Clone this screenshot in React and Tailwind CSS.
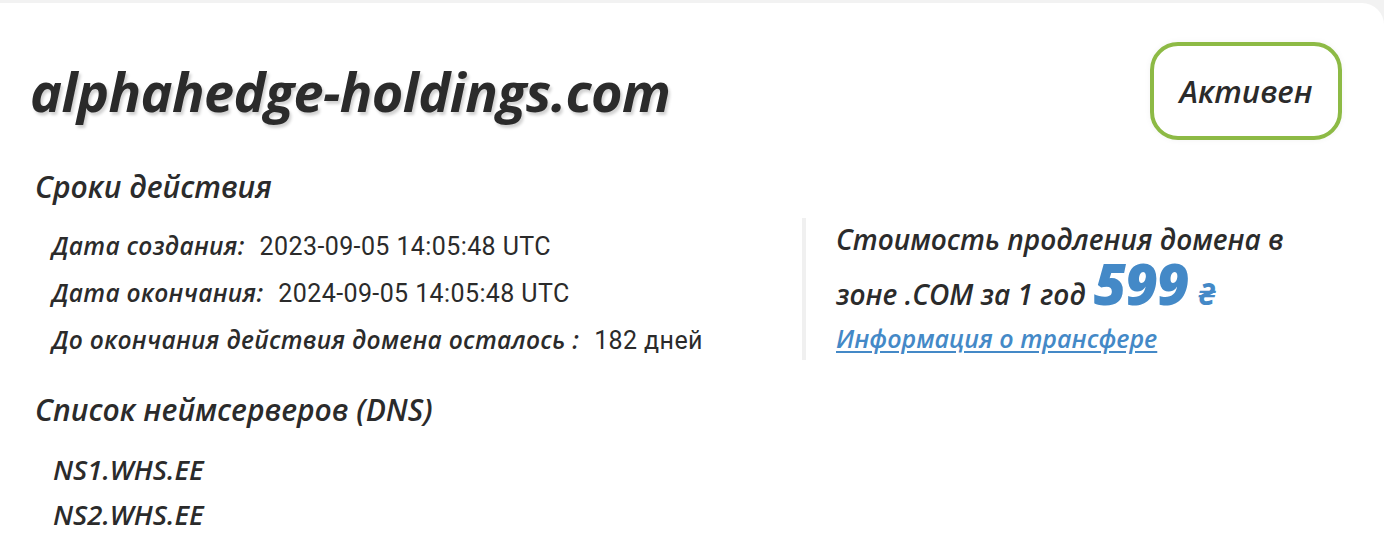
const font = { fontFamily: '"Open Sans", "Noto Sans", sans-serif' };

const DateRow = ({ label, value }) => (
  <div className="flex items-baseline h-[47px] leading-[47px]">
    <span className="italic font-semibold text-[24.5px] text-[#2b2b2b] tracking-[0.3px]">{label}</span>
    <span className="ml-[15px] text-[25px] text-[#2b2b2b] font-['Roboto',sans-serif] tracking-[0.4px]">{value}</span>
  </div>
);

export default function App() {
  return (
    <div className="bg-[#f2f2f2] pt-[3px] min-h-screen" style={font}>
      <div className="bg-white rounded-tr-[22px] min-h-[555px] pl-[30px] pr-[42px]">
        <div className="flex justify-between items-center pt-[39px] h-[137px]">
          <h1 className="italic font-bold text-[54px] leading-none text-[#2b2b2b] [text-shadow:2px_3px_3px_rgba(0,0,0,0.18)] tracking-[-0.6px]">
            alphahedge-holdings.com
          </h1>
          <div className="w-[192px] h-[98px] border-[4px] border-[#8dba45] rounded-[28px] flex items-center justify-center shadow-[0_0_6px_rgba(0,0,0,0.05)]">
            <span className="italic font-semibold text-[31px] text-[#2b2b2b]">Активен</span>
          </div>
        </div>

        <h2 className="mt-[27px] pl-[5px] italic font-semibold text-[30px] leading-[40px] text-[#2b2b2b]">
          Сроки действия
        </h2>

        <div className="flex h-[142px] mt-[11px]">
          <div className="w-[772px] pt-[4px] pl-[22px]">
            <DateRow label="Дата создания:" value="2023-09-05 14:05:48 UTC" />
            <DateRow label="Дата окончания:" value="2024-09-05 14:05:48 UTC" />
            <DateRow label="До окончания действия домена осталось :" value="182 дней" />
          </div>
          <div className="w-[4px] h-[142px] bg-[#f0f0f0]" />
          <div className="pl-[30px] text-[#2b2b2b]">
            <div className="italic font-semibold text-[28px] leading-[42px]">
              Стоимость продления домена в
            </div>
            <div className="flex items-baseline h-[46px] italic font-semibold">
              <span className="text-[28px] leading-[28px]">зоне .COM за 1 год</span>
              <span className="ml-[8px] font-extrabold text-[56px] leading-[46px] text-[#4489c7] tracking-[-1px]">599</span>
              <span className="ml-[10px] font-bold text-[30px] leading-[30px] text-[#4489c7]">₴</span>
            </div>
            <a
              href="#"
              className="block mt-[14px] italic font-semibold text-[25px] leading-[36px] text-[#4489c7] underline underline-offset-[3px]"
            >
              Информация о трансфере
            </a>
          </div>
        </div>

        <h2 className="mt-[30px] pl-[5px] italic font-semibold text-[30px] leading-[40px] text-[#2b2b2b]">
          Список неймсерверов (DNS)
        </h2>
        <div className="mt-[17px] pl-[23px] italic font-semibold text-[27.5px] leading-[45px] text-[#2b2b2b]">
          <div>NS1.WHS.EE</div>
          <div>NS2.WHS.EE</div>
        </div>
      </div>
    </div>
  );
}
